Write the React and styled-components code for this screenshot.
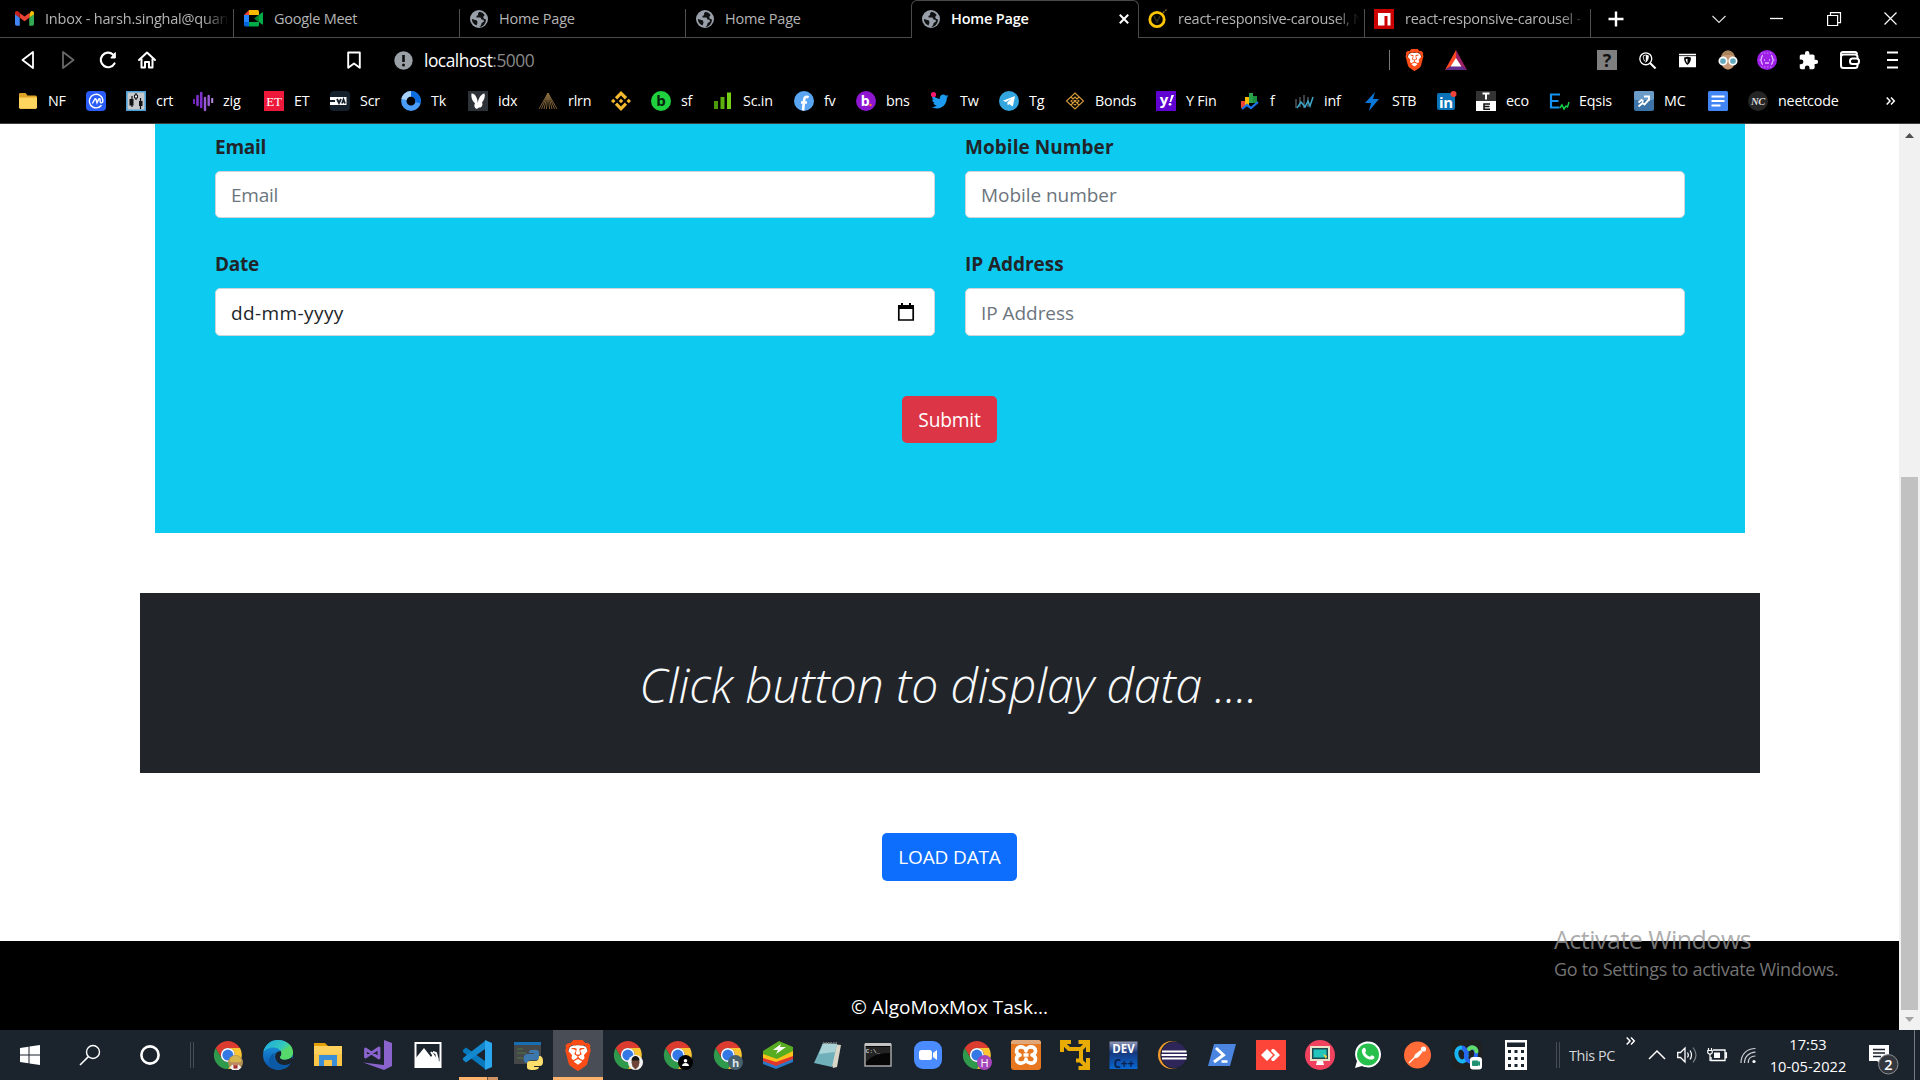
import React from "react";
import styled, { createGlobalStyle } from "styled-components";
import { SiBrave, SiBinance } from "react-icons/si";
import { FaTwitter } from "react-icons/fa";

const FONT = `"Segoe UI", "Open Sans", "Noto Sans", sans-serif`;

const GlobalStyle = createGlobalStyle`
  *, *::before, *::after { box-sizing: border-box; }
  body { margin: 0; overflow: hidden; font-family: ${FONT}; }
  svg { display: block; flex: none; overflow: visible; }
`;

/* ---------- shell ---------- */
const Screen = styled.div`
  width: 1920px;
  height: 1080px;
  display: flex;
  flex-direction: column;
  background: #000;
  position: relative;
`;
const Browser = styled.header`
  height: 124px;
  flex: none;
  background: #000;
  border-bottom: 1px solid #3e3e3e;
`;

/* ---------- tab strip ---------- */
const TabStrip = styled.div`
  display: flex;
  height: 38px;
`;
const Tab = styled.div`
  width: ${(p) => p.$w}px;
  height: 38px;
  flex: none;
  display: flex;
  align-items: center;
  gap: 11px;
  padding: 0 0 0 ${(p) => p.$pad || 10}px;
  border-bottom: 1px solid #4a4a4a;
  position: relative;
  ${(p) =>
    p.$active
      ? `border: 1px solid #4a4a4a; border-bottom: 0; border-radius: 6px 6px 0 0; padding: 0 0 1px 10px;`
      : p.$sep !== false &&
        `&::after { content: ""; position: absolute; right: 0; top: 9px; width: 1px; height: 28px; background: #4f4f4f; }`}
`;
const TabTitle = styled.span`
  flex: 1;
  height: 22px;
  line-height: 21px;
  margin-right: ${(p) => (p.$fade ? 5 : 8)}px;
  overflow: hidden;
  white-space: nowrap;
  font-size: 14.5px;
  letter-spacing: ${(p) => p.$ls || 0}px;
  font-weight: ${(p) => (p.$active ? 600 : 400)};
  color: ${(p) => (p.$active ? "#fff" : "#b4b4b4")};
  ${(p) => p.$fade && `mask-image: linear-gradient(90deg, #000 86%, transparent 100%);`}
`;
const TabClose = styled.span`
  width: 22px;
  margin-right: 3px;
  display: grid;
  place-items: center;
`;
const StripControls = styled.div`
  flex: 1;
  display: flex;
  align-items: center;
  border-bottom: 1px solid #4a4a4a;
`;
const Control = styled.span`
  width: ${(p) => p.$w}px;
  margin-left: ${(p) => p.$ml || 0}px;
  flex: none;
  display: grid;
  place-items: center;
`;

/* ---------- toolbar ---------- */
const Toolbar = styled.div`
  display: flex;
  align-items: center;
  height: 44px;
`;
const Tool = styled.span`
  width: ${(p) => p.$w}px;
  margin-left: ${(p) => p.$ml || 0}px;
  flex: none;
  display: grid;
  place-items: center;
`;
const Address = styled.div`
  margin-left: 6px;
  width: 965px;
  flex: none;
  font-size: 17.4px;
  line-height: 24px;
  letter-spacing: -0.5px;
  color: #fff;
`;
const Port = styled.span`
  color: #888;
`;
const ToolDivider = styled.i`
  width: 1px;
  height: 20px;
  background: #777;
`;

/* ---------- bookmarks ---------- */
const Bookmarks = styled.div`
  display: flex;
  align-items: center;
  height: 38px;
  padding: 0 0 1px 18px;
`;
const Bookmark = styled.div`
  width: ${(p) => p.$w}px;
  flex: none;
  display: flex;
  align-items: center;
  gap: 10px;
  color: #fff;
  font-size: 14.3px;
  line-height: 20px;
  letter-spacing: -0.2px;
  white-space: nowrap;
`;

/* ---------- page ---------- */
const PageRow = styled.div`
  display: flex;
  height: 906px;
  flex: none;
  background: #fff;
`;
const Viewport = styled.main`
  width: 1899px;
  display: flex;
  flex-direction: column;
`;
const FormPanel = styled.form`
  width: 1590px;
  height: 409px;
  margin-left: 155px;
  padding: 8px 60px 0;
  background: #0dcaf0;
  display: flex;
  flex-direction: column;
  align-items: center;
`;
const Fields = styled.div`
  width: 100%;
  display: grid;
  grid-template-columns: 720px 720px;
  column-gap: 30px;
  row-gap: 31px;
`;
const Field = styled.label`
  display: flex;
  flex-direction: column;
`;
const FieldLabel = styled.span`
  height: 39px;
  line-height: 30px;
  font-size: 19px;
  font-weight: 700;
  color: #212529;
  letter-spacing: ${(p) => p.$ls}px;
`;
const FieldBox = styled.div`
  height: ${(p) => p.$h || 47}px;
  display: flex;
  align-items: center;
  justify-content: space-between;
  padding: 0 18px 0 15px;
  background: #fff;
  border: 1px solid #ced4da;
  border-radius: 5px;
  font-size: 19px;
  letter-spacing: ${(p) => p.$ls}px;
  color: ${(p) => (p.$filled ? "#212529" : "#6c757d")};
`;
const FieldText = styled.span`
  padding-top: ${(p) => (p.$low ? 2 : 0)}px;
`;
const Button = styled.button`
  width: ${(p) => p.$w}px;
  height: ${(p) => p.$h || 47}px;
  flex: none;
  padding: 0;
  border: 0;
  border-radius: 5px;
  color: #fff;
  background: ${(p) => p.$bg};
  font: 400 ${(p) => p.$fs}px/30px ${FONT};
  letter-spacing: ${(p) => p.$ls}px;
  white-space: nowrap;
  margin-top: 60px;
  margin-right: ${(p) => p.$mr || 0}px;
`;
const Banner = styled.section`
  width: 1620px;
  height: 180px;
  margin: 60px 0 0 140px;
  padding: 4px 3px 0 0;
  display: grid;
  place-items: center;
  background: #212529;
`;
const BannerText = styled.h1`
  margin: 0;
  font-size: 48px;
  font-weight: 300;
  font-style: italic;
  line-height: 60px;
  letter-spacing: -0.1px;
  color: #f8f9fa;
  white-space: nowrap;
`;
const LoadRow = styled.div`
  height: 168px;
  display: flex;
  justify-content: center;
`;
const Footer = styled.footer`
  height: 89px;
  display: flex;
  justify-content: center;
  padding-top: 51px;
  background: #000;
  color: #fff;
  font-size: 19px;
  line-height: 30px;
  letter-spacing: 0.04px;
`;
const Scrollbar = styled.aside`
  width: 21px;
  display: flex;
  flex-direction: column;
  align-items: center;
  padding-top: 9px;
  background: #f1f1f1;
`;
const Thumb = styled.div`
  width: 17px;
  height: 533px;
  margin: 339px 0 7px;
  background: #c1c1c1;
`;

const Activation = styled.div`
  position: absolute;
  left: 1554px;
  top: 921px;
  color: rgba(150, 150, 150, 0.78);
  white-space: nowrap;
`;
const ActivationTitle = styled.div`
  font-size: 25px;
  line-height: 36px;
  letter-spacing: -0.5px;
`;
const ActivationHint = styled.div`
  font-size: 18px;
  line-height: 24px;
  letter-spacing: -0.3px;
`;

/* ---------- taskbar ---------- */
const Taskbar = styled.footer`
  height: 50px;
  flex: none;
  display: flex;
  align-items: stretch;
  background: #1b232d;
`;
const TaskCell = styled.div`
  width: ${(p) => p.$w}px;
  flex: none;
  display: grid;
  place-items: center;
  background: ${(p) => (p.$active ? "#494e56" : "transparent")};
  box-shadow: ${(p) => (p.$active ? "inset 0 -3px #ffb26b" : "none")};
  ${(p) =>
    p.$open &&
    `background: linear-gradient(90deg, #ffb26b 28px, #70543c 28px 29px, #cf9262 29px) 6px 47px / 39px 3px no-repeat;`}
`;
const Grip = styled.i`
  width: 4px;
  height: 26px;
  flex: none;
  align-self: center;
  border: solid #474d56;
  border-width: 0 1px;
`;
const Tray = styled.div`
  flex: 1;
  margin-left: 16px;
  display: flex;
  align-items: center;
  color: #fff;
`;
const TrayText = styled.span`
  margin-left: 9px;
  width: 53px;
  flex: none;
  font-size: 14.4px;
  letter-spacing: -0.4px;
  color: #d6d8da;
  white-space: nowrap;
`;
const TrayItem = styled.span`
  width: ${(p) => p.$w}px;
  height: 50px;
  padding-bottom: ${(p) => p.$raise || 0}px;
  flex: none;
  display: grid;
  place-items: center;
`;
const Clock = styled.div`
  width: 96px;
  flex: none;
  font-size: 14.6px;
  line-height: 22.5px;
  letter-spacing: 0.05px;
  text-align: center;
`;
const ShowDesktop = styled.i`
  width: 1px;
  height: 50px;
  margin-left: auto;
  margin-right: 5px;
  background: #747980;
`;

/* ---------- icons ---------- */
const Svg = ({ s = 20, w, h, v = 20, children, ...r }) => (
  <svg width={w || s} height={h || s} viewBox={`0 0 ${v} ${v}`} fill="none" {...r}>
    {children}
  </svg>
);
const Letter = ({ x = 10, y = 15, size = 14, fill = "#fff", children, ...r }) => (
  <text x={x} y={y} fontSize={size} fill={fill} textAnchor="middle" fontFamily="Open Sans, sans-serif" fontWeight="700" {...r}>
    {children}
  </text>
);

const Gmail = () => (
  <Svg s={19} v={24}>
    <path d="M0 6v13a2 2 0 0 0 2 2h4V11z" fill="#4285f4" />
    <path d="M24 6v13a2 2 0 0 1-2 2h-4V11z" fill="#34a853" />
    <path d="M18 6.5V11l6-4.5V5c0-2-2.3-3.2-4-2z" fill="#fbbc04" />
    <path d="M6 11V5l6 4.5L18 5v6l-6 4.5z" fill="#ea4335" />
    <path d="M0 5v1.5L6 11V4.800L4 3.200C2.300 2 0 3 0 5z" fill="#c5221f" />
  </Svg>
);
const Meet = () => (
  <Svg s={19} v={19}>
    <path d="M0 6h5v8H0z" fill="#2684fc" />
    <path d="M0 6l5-5v5z" fill="#ea4335" />
    <path d="M5 1h8.500a1.500 1.500 0 0 1 1.500 1.500V6H5z" fill="#ffba00" />
    <path d="M0 13h5v4.500H1.500A1.500 1.500 0 0 1 0 16z" fill="#0066da" />
    <path d="M5 13h10v3a1.500 1.500 0 0 1-1.500 1.500H5z" fill="#00ac47" />
    <path d="M10 9.500l5-4v8z" fill="#00832d" />
    <path d="M15 6l3-2.600c.5-.4 1-.1 1 .5v11c0 .6-.5.9-1 .5L15 13z" fill="#00ac47" />
  </Svg>
);
const Globe = () => (
  <Svg s={18} v={18}>
    <circle cx="9" cy="9" r="9" fill="#9aa0a9" />
    <path d="M9.500 1.800 8 3.200 8.200 5 6.500 6v1.500h4l1 2 2 .3.500 1.600-2.300 1.600-.8 2.500-1.700 1.500A7.200 7.200 0 0 0 16 9.500L14 8.800l-.9-1.900L14.700 5A7.200 7.200 0 0 0 9.500 1.800zM2 9l5 1.600.5 2.200-1 2.600A7.200 7.200 0 0 1 1.900 9.700z" fill="#101113" />
  </Svg>
);
const Codesandbox = () => (
  <Svg s={19} v={19}>
    <circle cx="9" cy="10.500" r="7.200" stroke="#fec502" strokeWidth="2.800" />
    <path d="M6 7l3 6 3-6" stroke="#2e2c1c" strokeWidth="1.600" />
    <path d="M15 4l3.500-3.500" stroke="#80682a" strokeWidth="1.500" strokeDasharray="2 1.200" />
  </Svg>
);
const Npm = () => (
  <Svg>
    <path d="M0 0h20v20H0z" fill="#cb0000" />
    <path d="M4 4h12.500v12.500h-3V7h-3v9.500H4z" fill="#fff" />
  </Svg>
);

const tabs = [
  { icon: <Gmail />, title: "Inbox - harsh.singhal@quantr", w: 234, pad: 15, fade: true, ls: -0.2 },
  { icon: <Meet />, title: "Google Meet", w: 226, ls: -0.25 },
  { icon: <Globe />, title: "Home Page", w: 226, ls: -0.2 },
  { icon: <Globe />, title: "Home Page", w: 225, sep: false, ls: -0.2 },
  { icon: <Globe />, title: "Home Page", w: 228, active: true, ls: -0.2 },
  { icon: <Codesandbox />, title: "react-responsive-carousel, Nex", w: 226, pad: 9, fade: true, ls: -0.25 },
  { icon: <Npm />, title: "react-responsive-carousel - npm", w: 226, pad: 9, fade: true, ls: -0.25 },
];

const BraveMark = ({ w, h }) => (
  <svg width={w} height={h} viewBox="0 0 24 24" preserveAspectRatio="none">
    <path d="M5.500 5.500l3-1.500h7l3 1.500 1.500 4-2 6-6 5.500-6-5.500-2-6z" fill="#fff" />
    <SiBrave size={24} color="#fb4c17" />
  </svg>
);

const bookmarks = [
  ["NF", 68, <Svg><path d="M1 3.500C1 2.500 1.500 2 2.500 2h5l2 2.500H17c1 0 2 .5 2 1.800V16c0 1-.8 1.800-1.800 1.800H2.800C1.800 17.800 1 17 1 16z" fill="#e0a526" /><path d="M1 6.500h18V16c0 1-.8 1.800-1.800 1.800H2.800C1.800 17.800 1 17 1 16z" fill="#ffd55f" /></Svg>],
  ["", 40, <Svg><rect width="20" height="20" rx="4" fill="#2a5cf7" /><path d="M15.500 14.200A6.800 6.800 0 1 1 16.900 10c0 2.200-2.700 2.700-2.800.2V8.600c0-1-1-1.200-1.500-.2L11 11.700 10 8.300c-.2-.8-1-.8-1.300 0L6.400 12.500" stroke="#fff" strokeWidth="1.400" /></Svg>],
  ["crt", 67, <Svg><path d="M.8.8h18.400v18.400H.8z" fill="#c6c9cb" stroke="#4e9fd5" strokeWidth="1.600" /><path d="M6 5v11M10 2v7M14.500 7v11" stroke="#111" strokeWidth="1.200" /><path d="M3.500 8h4v6.500h-4zM13 10h3.500v5H13z" fill="#111" /><path d="M8.500 4h3v3h-3z" fill="#eee" stroke="#111" /></Svg>],
  ["zig", 71, <Svg><path d="M1 8v5" stroke="#6d22b8" strokeWidth="2" /><path d="M4.500 5v9M8.200 2v14" stroke="#7c30cc" strokeWidth="2.600" strokeLinecap="round" /><path d="M12 7v12M15.700 5v9" stroke="#9a5cd4" strokeWidth="2.400" strokeLinecap="round" /><path d="M19.200 7v5" stroke="#b58ae0" strokeWidth="2" /></Svg>],
  ["ET", 66, <Svg><path d="M0 0h20v20H0z" fill="#ed193b" /><Letter size={13} y={15} fontWeight="400" fontFamily="Liberation Serif, serif">ET</Letter></Svg>],
  ["Scr", 71, <Svg><rect width="20" height="20" rx="4" fill="#14202c" /><path d="M0 6h16.500v8H0z" fill="#fff" /><path d="M0 10h5M7 8l2 4 2-4M12 12.500l1.500-4 1.500 4" stroke="#14202c" strokeWidth="1.800" /></Svg>],
  ["Tk", 67, <Svg><circle cx="10" cy="10" r="7.200" stroke="#4a9df8" strokeWidth="5.400" /><path d="M10 2.800a7.200 7.200 0 0 1 7 9" stroke="#0b6de0" strokeWidth="5.400" /><path d="M3 8.500A7.200 7.200 0 0 1 10 2.800" stroke="#a9d2fb" strokeWidth="5.400" /></Svg>],
  ["idx", 70, <Svg><path d="M0 0h20v20H0z" fill="#2d3238" /><path d="M9 18c-3-1-3-4-2-6-3-2-4-6-3.500-9.500C7 2 9.500 7 9.800 12 10.500 7 13 3 16.500 2.500c1 3-.5 6.500-2.500 9 1.500 3-1 5.500-3 5-.8.3-1.500 1-2 1.500z" fill="#fff" /></Svg>],
  ["rlrn", 73, <Svg><path d="M10 2L1 18M10 2L3.500 18M10 2L6 18M10 2L8.500 18M10 2l1.500 16M10 2l4 16M10 2l6.500 16M10 2l9 16" stroke="#8a6d3f" strokeWidth=".9" /></Svg>],
  ["", 40, <SiBinance size={20} color="#f3ba2f" />],
  ["sf", 62, <Svg><circle cx="10" cy="10" r="10" fill="#1fd03f" /><Letter fill="#06210c" size={15}>b</Letter></Svg>],
  ["Sc.in", 81, <Svg><path d="M3 10v8" stroke="#4c9a0a" strokeWidth="4" /><path d="M9.500 6v12" stroke="#5cb00d" strokeWidth="4" /><path d="M16 1.500V18" stroke="#74d017" strokeWidth="4" /></Svg>],
  ["fv", 62, <Svg><circle cx="10" cy="10" r="10" fill="#5aa5f2" /><path d="M14.500 6.500c-2-1.500-4-.5-4.300 2L9 19.500M7 11.500h6" stroke="#fff" strokeWidth="2.600" /></Svg>],
  ["bns", 74, <Svg><circle cx="10" cy="10" r="10" fill="#8e16d0" /><Letter size={14} x={9}>b</Letter><circle cx="14.500" cy="14" r="1.200" fill="#ff7c30" /></Svg>],
  ["Tw", 69, <Svg><g transform="translate(1.500 2)"><FaTwitter size={17} color="#1d9bf0" /></g><circle cx="3.500" cy="3.500" r="2.600" fill="#f5186c" /></Svg>],
  ["Tg", 66, <Svg><circle cx="10" cy="10" r="10" fill="#34a6df" /><path d="M3.800 9.800l11-4.400c.7-.3 1.200.1 1 .9l-1.800 8.300c-.1.7-.6.8-1.200.5l-2.600-2-1.400 1.300-.6-2.800 4.400-4-5.600 3.500z" fill="#fff" /></Svg>],
  ["Bonds", 91, <Svg><path d="M10 2l8.500 8-8.500 8-8.500-8zM6 6l8 8M14 6l-8 8M10 6l4 4-4 4-4-4z" stroke="#d79a3b" strokeWidth="1.100" /></Svg>],
  ["Y Fin", 84, <Svg><path d="M0 0h20v20H0z" fill="#6001d2" /><Letter size={15} x={8} y={14}>y</Letter><path d="M13.500 11l2-7h2.500l-2.800 7z" fill="#fff" /><circle cx="14" cy="13.300" r="1.400" fill="#fff" /></Svg>],
  ["f", 54, <Svg><path d="M9 2h4v10H9z" fill="#2ba24c" /><path d="M13 5h4v7h-4z" fill="#1d8f3e" /><path d="M5 6h4v8H5z" fill="#fbbc04" /><path d="M1 10h4v7H1z" fill="#ea4335" /><path d="M2 18l5-4 4 3 7-6" stroke="#1a73e8" strokeWidth="2.200" /></Svg>],
  ["inf", 68, <Svg><path d="M2 8v9M6 6v10M10 4v13M14 6v10" stroke="#4d555b" strokeWidth="1.500" /><path d="M3 17l4-6 4 5 3-6 2 5 3-9" stroke="#3aa6c9" strokeWidth="1.500" /></Svg>],
  ["STB", 75, <Svg><path d="M13 1L3 12h6l-2 8L17 8h-6z" fill="#0b78d8" /></Svg>],
  ["", 39, <Svg><rect y="2" width="18" height="17" rx="2" fill="#0a73b7" /><Letter x={9} y={16.500} size={15}>in</Letter><circle cx="16.500" cy="3" r="3" fill="#f0433a" /></Svg>],
  ["eco", 73, <Svg><path d="M0 0h20v10H0z" fill="#333" /><path d="M0 10h20v10H0z" fill="#fff" /><path d="M6.500 2.500h7M10 2.500v6" stroke="#fff" strokeWidth="2" /><path d="M14 13H8v5.200h6M8 15.600h5.500" stroke="#111" strokeWidth="1.500" /></Svg>],
  ["Eqsis", 85, <Svg><path d="M11 3.500H2v13h8.500M2 10h7.500" stroke="#1593f0" strokeWidth="2.200" /><path d="M11 17l2-3 2 4 2-3 1.500 1 1.500-5" stroke="#13d64a" strokeWidth="1.400" /></Svg>],
  ["MC", 74, <Svg><rect width="20" height="20" rx="2" fill="#3d74a8" /><rect width="20" height="9" rx="2" fill="#6b9cc8" /><path d="M4.500 15.500l4-3.500 2 1.500 4-4.500M4.500 11.500l3-2.500 2 1.500M10 5.500h5V10" stroke="#fff" strokeWidth="1.900" /></Svg>],
  ["", 40, <Svg><rect width="20" height="20" rx="1.500" fill="#4285f4" /><path d="M3.500 5.500h13M3.500 10h13M3.500 14.500h9" stroke="#fff" strokeWidth="2.200" /></Svg>],
  ["neetcode", 138, <Svg><circle cx="10" cy="10" r="10" fill="#252525" /><Letter size={10.500} y={13.500} fontFamily="Liberation Serif, serif" fontStyle="italic" fill="#ddd">NC</Letter></Svg>],
];

const Chrome = ({ badge }) => (
  <Svg s={30} v={30}>
    <g transform="translate(.8 1) scale(1.170)">
      <path d="M1.610 6A12 12 0 0 1 22.390 6H12A6 6 0 0 0 6.800 15z" fill="#dc3b2f" />
      <path d="M22.390 6A12 12 0 0 1 12 24l5.200-9A6 6 0 0 0 12 6z" fill="#fcc531" />
      <path d="M12 24A12 12 0 0 1 1.610 6L6.800 15a6 6 0 0 0 10.400 0z" fill="#2f9a4c" />
      <circle cx="12" cy="12" r="6" fill="#fff" />
      <circle cx="12" cy="12" r="4.700" fill="#3478e5" />
    </g>
    {badge}
  </Svg>
);
const Badge = ({ bg, children }) => (
  <g transform="translate(22.500 22.500)">
    <circle r="7.500" fill={bg} />
    {children}
  </g>
);

const taskApps = [
  { icon: <Chrome badge={<Badge bg="#b28f55"><path d="M-6-1a6 6 0 0 1 12 0l-2 1h-8z" fill="#d5b64e" /><path d="M-4 0h8v4h-8z" fill="#c08564" /><path d="M-6 5l3-3 3 4 3-4 3 3-3 2.500h-6z" fill="#eee" /><path d="M-2 3h4v3h-4z" fill="#a62b2b" /></Badge>} /> },
  { icon: (
    <Svg s={30} v={30}>
      <defs>
        <linearGradient id="edgeTop" x1="0" y1="0" x2="1" y2=".5"><stop stopColor="#1fa8e0" /><stop offset=".6" stopColor="#30c6c0" /><stop offset="1" stopColor="#62e05a" /></linearGradient>
        <linearGradient id="edgeLow" x1="0" y1="0" x2="0" y2="1"><stop stopColor="#1b9de2" /><stop offset="1" stopColor="#0a4ea8" /></linearGradient>
      </defs>
      <circle cx="15" cy="15" r="15" fill="url(#edgeLow)" />
      <path d="M.3 12C2 4.500 8 0 15 0c9 0 15 6 15 12 0 5-4 7.500-8 7.500-3.500 0-5-1-5-2 0-.8 1.500-1.500 1.500-4 0-3-3.500-6-8-6-5 0-9 2.500-10.200 4.500z" fill="url(#edgeTop)" />
      <path d="M11 15c0 7 5 10 10 10 3 0 5-1 7-2-3 5-8 7-13 7-6 0-9-5-9-9 0-3 2-7 6-8z" fill="#0c59a4" />
      <path d="M18 11c1 2 .5 4-1 6 0 2 3 3 6 2.500 2 0 4-1 6-2.500l1 3-2 3c-8 5-16 0-16-7 0-2 2-5 6-5z" fill="#1b232d" />
      <path d="M18 11c1 3 .5 4-1 6 0 2 2 2.500 5 2.500 5 0 8-3 8-7.500L27 6z" fill="#56d96a" />
    </Svg>
  ) },
  { icon: <Svg s={30} v={30}><path d="M1 3h11l3 3h-14z" fill="#e3a008" /><path d="M1 6h28v20H1z" fill="#ffd15c" /><path d="M1 14h28v12H1z" fill="#fbc547" /><path d="M6 26V15h18v11h-5v-6h-8v6z" fill="#3b8fd9" /></Svg> },
  { icon: <Svg s={30} v={30}><path d="M21 0l8 3v23l-8 4L0 22.500l21 2.500z" fill="#8a63cc" /><path d="M2.500 9v8L16 8v10z" stroke="#8a63cc" strokeWidth="2.800" strokeLinejoin="round" /></Svg> },
  { icon: <Svg s={30} v={30}><path d="M2.500 3h25v24h-25z" stroke="#fff" strokeWidth="2" /><path d="M2 27V19l9-11 7 9 2-3 8 9v4z" fill="#fff" /><path d="M18 12l5 7M20 12l3 1 2 7" stroke="#fff" strokeWidth="2" /></Svg> },
  { open: true, icon: <Svg s={30} v={30}><path d="M0 10l3-2.500L22 21v8L0 12z" fill="#0879be" /><path d="M0 20l3 2.500L22 9V1L0 18z" fill="#1388cf" /><path d="M22 0l7 3v24l-7 3z" fill="#2aa7ee" /></Svg> },
  { icon: <Svg s={30} v={30}><path d="M1 2h27v22H1z" fill="#454748" /><path d="M1 2h27v3H1z" fill="#176fb3" /><path d="M4 9h6M4 13h9M4 18h6" stroke="#4e7b45" strokeWidth="1.200" /><path d="M19 10c5-1 7 0 7 3v4c0 2-1 3-3 3h-5c-2 0-3 1-3 3h-2c-2-1-3-3-2-7 1-2 2-2 4-2h6v-1h-5c0-2 0-3 3-3z" fill="#3c77ad" /><path d="M20 30c-5 0-6-1-6-3v-3c0-2 1-3 3-3h5c3 0 4-2 4-5 3 0 4 2 4 5 0 4-1 5-4 5h-5v1h5c0 2-2 3-6 3z" fill="#ffdf6b" /></Svg> },
  { active: true, icon: <BraveMark w={30} h={31} /> },
  { icon: <Chrome badge={<Badge bg="#f3f3f3"><path d="M-4 0c0-7 8-7 8 0l-1 4-3 3-3-3z" fill="#6d4436" /><path d="M-4-2c0-6 8-6 8 0z" fill="#171717" /></Badge>} /> },
  { icon: <Chrome badge={<Badge bg="#000"><circle cy="-1.800" r="1.800" fill="#fff" /><path d="M-3.500 3.500c0-4 7-4 7 0z" fill="#fff" /></Badge>} /> },
  { icon: <Chrome badge={<Badge bg="#47606d"><Letter x={0} y={4} size={11} fill="#dfe6ea">h</Letter></Badge>} /> },
  { icon: <Svg s={30} v={30}><path d="M0 20l12-6 18 3v5L13 29 0 24z" fill="#2a79c4" /><path d="M0 17l12-6 18 3v5L13 26 0 21z" fill="#e2352e" /><path d="M0 14l12-6 18 3v5L13 22 0 18z" fill="#fbc21a" /><path d="M0 11L16 1l14 6v4L14 19 0 14z" fill="#58ac22" /><path d="M10 10l8-6-1 3 6 0-10 7 2-4z" fill="#fff" /></Svg> },
  { icon: <Svg s={30} v={30}><path d="M10 3l18 2-4 22-4 1z" fill="#d9d6c8" /><path d="M10 3l14 1-5 23L1 23z" fill="#6fb0bb" /><path d="M10 3l14 1-2 8L6 14z" fill="#a9d3d6" /><path d="M10 3h15" stroke="#777" strokeWidth="2" strokeDasharray="1.500 1" /></Svg> },
  { icon: <Svg s={30} v={30}><path d="M2 4.500h26v21.500H2z" fill="#060606" stroke="#a6a6a6" strokeWidth="1.500" /><path d="M2 3h26v3H2z" fill="#c3c3c3" /><path d="M3 7h24v6c-12 0-18 3-24 9z" fill="#242424" /><Letter x={10} y={13} size={6} fill="#ccc" fontFamily="Liberation Mono, monospace">C:\_</Letter></Svg> },
  { icon: <Svg s={30} v={30}><rect x="1" y="1" width="28" height="28" rx="9" fill="#4a8cfd" /><rect x="6" y="10" width="13" height="10" rx="2.500" fill="#fff" /><path d="M20 13l4-3v10l-4-3z" fill="#fff" /></Svg> },
  { icon: <Chrome badge={<Badge bg="#a446b9"><Letter x={0} y={4} size={11} fontWeight="400">H</Letter></Badge>} /> },
  { icon: <Svg s={30} v={30}><rect width="30" height="30" rx="3" fill="#e8781f" /><path d="M0 3a3 3 0 0 1 3-3h24a3 3 0 0 1 3 3v1H0z" fill="#e0a878" /><path d="M15 11C15 6 24.500 5 24.500 11C24.500 14 21 15 21 15C21 15 24.500 16 24.500 19C24.500 25 15 24 15 19C15 24 5.500 25 5.500 19C5.500 16 9 15 9 15C9 15 5.500 14 5.500 11C5.500 5 15 6 15 11zM12.500 15h5" stroke="#fff" strokeWidth="3.600" strokeLinejoin="round" /></Svg> },
  { icon: <Svg s={30} v={30}><path d="M2 12V2h9M2 2l7 7h12M18.500 2H28v10M28 2l-7 7v12l7 7M28 18v10h-9.500M16 20.500h5" stroke="#e8ac05" strokeWidth="4" /></Svg> },
  { icon: <Svg s={30} v={30}><defs><linearGradient id="dev" x1="0" y1="0" x2="0" y2="1"><stop stopColor="#9298b8" /><stop offset=".4" stopColor="#17387e" /><stop offset="1" stopColor="#0868d3" /></linearGradient></defs><path d="M.5 1.500h28v27.500H.5z" fill="url(#dev)" /><Letter x={14.500} y={12.500} size={11.500}>DEV</Letter><Letter x={15} y={28} size={11.500} fill="#08204e">C++</Letter></Svg> },
  { icon: <Svg s={30} v={30}><circle cx="14" cy="15" r="14" fill="#f19a2e" /><circle cx="16" cy="15" r="13.700" fill="#1b232d" /><circle cx="16" cy="15" r="12.800" fill="#2e2558" /><path d="M4 11.500h24.500M3.500 15h25.500M4 18.500h24.500" stroke="#fff" strokeWidth="1.900" /></Svg> },
  { icon: <Svg s={30} v={30}><path d="M7 4h22l-6 22H1z" fill="#4b85df" /><path d="M9 8l7.500 7L7 22" stroke="#fff" strokeWidth="3" /><path d="M14.500 21.500h6" stroke="#fff" strokeWidth="2.500" /></Svg> },
  { icon: <Svg s={30} v={30}><path d="M0 0h30v30H0z" fill="#fe4539" /><path d="M11 9l6 6-6 6-6-6zM16 9h2l6 6-6 6h-2l-1-2 4-4-4-4z" fill="#fff" /></Svg> },
  { icon: <Svg s={30} v={30}><circle cx="15" cy="15" r="15" fill="#f0415f" /><path d="M5 6h20v15H5z" fill="#e9e1c9" /><path d="M7 8h16v11H7z" fill="#1b4b52" /><path d="M8.500 9.500h13v8h-13z" fill="#23c4bb" /><path d="M12 21h6l1 4h-8z" fill="#fff" /><path d="M18 14l4 2-1 3z" fill="#ffd43c" /></Svg> },
  { icon: <Svg s={30} v={30}><path d="M1 28l2-7C-2 11 4 1.500 14 1.500c8 0 13 6 13 13 0 9-9 16-19 11.500z" fill="#fff" /><circle cx="14" cy="14.500" r="11" fill="#28c04c" /><path d="M9.500 8c1-.5 2 0 2.500 2.500.2.800-1 1.500-.7 2.200 1 2 2.500 3.300 4.500 4 .8 0 1.300-1.500 2-1.500 2.500 1 3 1.500 2.500 2.800-2.500 4-12 0-12.500-7 0-1.400 1-2.500 1.700-3z" fill="#fff" /></Svg> },
  { icon: <Svg s={30} v={30}><circle cx="14.500" cy="15" r="13.500" fill="#ff6c37" /><path d="M6 23l9-9" stroke="#fff" strokeWidth="1.200" /><path d="M10.500 18.500l1.500-4 5.500-4.500 2 2-4.500 5.500z" fill="#fff" /><circle cx="20.500" cy="9" r="2.600" fill="#fff" /></Svg> },
  { icon: <Svg s={30} v={30}><rect width="30" height="30" rx="6" fill="#1f2021" /><ellipse cx="9.500" cy="14.500" rx="5" ry="7" stroke="#18b4f4" strokeWidth="4" transform="rotate(-14 9.500 14.500)" /><ellipse cx="19" cy="14.500" rx="5" ry="7" stroke="#2668f0" strokeWidth="4" transform="rotate(14 19 14.500)" /><path d="M17 9c3-3 7-1.500 7.500 2.500" stroke="#5fdc6b" strokeWidth="4" strokeLinecap="round" /><path d="M10 7.500c3 0 4 4 4.500 7" stroke="#2668f0" strokeWidth="4" /><rect x="18" y="17" width="12" height="12.500" rx="3" fill="#fff" /><rect x="20" y="20.500" width="6.500" height="5.500" rx="1" fill="#1d9170" /><path d="M26 22.500l2-1.500v5l-2-1.500z" fill="#1d9170" /></Svg> },
  { icon: <Svg s={30} v={30}><path d="M4 0h22v30H4z" fill="#fff" /><path d="M6 2.500h18v4.500H6z" fill="#1b232d" /><g stroke="#1b232d" strokeWidth="3"><path d="M7 11.500h16M7 18.500h16M7 25.500h16" strokeDasharray="3 3.500" /></g></Svg> },
];
const cellWidth = (i) => (i < 15 ? 50 : i === 15 ? 48 : 49);

const BackIcon = () => <Svg><path d="M15 2v16L4.500 10z" stroke="#fff" strokeWidth="1.800" strokeLinejoin="round" /></Svg>;
const ForwardIcon = () => <Svg><path d="M5 2v16l10.500-8z" stroke="#686868" strokeWidth="1.800" strokeLinejoin="round" /></Svg>;
const ReloadIcon = () => <Svg><path d="M16.500 13.500A7.300 7.300 0 1 1 15 4.500" stroke="#fff" strokeWidth="2.200" strokeLinecap="round" /><path d="M17.300 2.500v5.500h-4.500z" fill="#fff" stroke="#fff" strokeLinejoin="round" /></Svg>;
const HomeIcon = () => <Svg><path d="M2 10l8-7.500 8 7.500M4.500 9v8.500H8V12h4v5.500h3.500V9" stroke="#fff" strokeWidth="2" strokeLinejoin="round" strokeLinecap="round" /></Svg>;
const BookmarkIcon = () => <Svg><path d="M4.200 2.500h11.600v15.300L10 13.500l-5.800 4.300z" stroke="#fff" strokeWidth="1.900" strokeLinejoin="round" /></Svg>;
const InfoIcon = () => <Svg s={19} v={19}><circle cx="9.500" cy="9.500" r="9.200" fill="#9aa0a6" /><path d="M9.500 4v7" stroke="#0c0c0c" strokeWidth="2.600" /><circle cx="9.500" cy="14" r="1.500" fill="#0c0c0c" /></Svg>;
const BatIcon = () => <Svg w={22} h={20} preserveAspectRatio="none"><path d="M10 0L0 20l10-7z" fill="#ff4724" /><path d="M10 0l10 20-10-7z" fill="#9e1f63" /><path d="M0 20h20l-5-4H6z" fill="#662d91" /><path d="M10 8l5 8.500H5z" fill="#fff" /></Svg>;
const QuestionIcon = () => <Svg><path d="M0 0h20v20H0z" fill="#7f7f7f" /><Letter size={18} y={16.500} fill="#111">?</Letter></Svg>;
const SearchIcon = () => <Svg s={17}><circle cx="8" cy="8" r="7" stroke="#fff" strokeWidth="1.600" /><path d="M13 13l6.500 6.500" stroke="#fff" strokeWidth="2.400" /><path d="M5 4.500l3-1 3 1c0 4-1 6-3 7.500-2-1.500-3-3.500-3-7.500z" stroke="#fff" /><path d="M8 3.500V12c2-1.500 3-3.500 3-7.500z" fill="#fff" /></Svg>;
const ShieldWindowIcon = () => <Svg w={17} h={15} preserveAspectRatio="none"><path d="M0 1h20v18H0z" fill="#fff" /><path d="M0 3.500h20" stroke="#000" /><path d="M6 6l4-1 4 1c0 5-1 7-4 10-3-3-4-5-4-10z" fill="#000" /><path d="M10 7.500v6c-1.500-1.500-2-3-2-5.500z" fill="#fff" /></Svg>;
const AvatarIcon = () => <Svg><path d="M4 8c0-10 12-10 12 0v6c0 3-3 5.500-6 5.500S4 17 4 14z" fill="#c69775" /><path d="M3 9C2-2 18-2 17 9l-3-4H6z" fill="#a8845c" /><circle cx="5" cy="11" r="3.700" fill="#64a8bd" stroke="#fff" strokeWidth="1.700" /><circle cx="15" cy="11" r="3.700" fill="#64a8bd" stroke="#fff" strokeWidth="1.700" /></Svg>;
const BracesIcon = () => <Svg><circle cx="10" cy="10" r="10" fill="#9d1fe8" /><path d="M6 5.500c-2 0-1 4-2.500 4.500C5 10.500 4 14.500 6 14.500M14 5.500c2 0 1 4 2.500 4.500-1.500.5-.5 4.500-2.500 4.500M7 10h1M12 10h1M8 13h4" stroke="#e4b8ff" strokeWidth="1.300" /><path d="M4 3h12M4 17h12" stroke="#cf8bf7" strokeDasharray="1.500 1.500" /></Svg>;
const PuzzleIcon = () => <Svg s={21} v={24}><path d="M20.500 11H19V7c0-1.100-.9-2-2-2h-4V3.500a2.500 2.500 0 0 0-5 0V5H4c-1.100 0-2 .9-2 2v3.800h1.500a2.700 2.700 0 0 1 0 5.400H2V20c0 1.100.9 2 2 2h3.800v-1.500a2.700 2.700 0 0 1 5.400 0V22H17c1.100 0 2-.9 2-2v-4h1.500a2.500 2.500 0 0 0 0-5z" fill="#fff" /></Svg>;
const WalletIcon = () => <Svg><rect x="1" y="4.500" width="16.500" height="13.500" rx="2.500" stroke="#fff" strokeWidth="2" /><path d="M1 6V4c0-1.200.8-2 2-2h12c1.200 0 2 1 2 2.500" stroke="#fff" strokeWidth="2" /><rect x="10" y="8.500" width="9" height="5.500" rx="2.500" fill="#000" stroke="#fff" strokeWidth="2" /></Svg>;
const MenuIcon = () => <Svg w={11} h={20} preserveAspectRatio="none"><path d="M0 2.500h20M0 10h20M0 17.500h20" stroke="#fff" strokeWidth="2" /></Svg>;

const Chevrons = () => (
  <svg width="9" height="8" viewBox="0 0 9 8" fill="none"><path d="M.7.500L4 4 .7 7.500M5 .500L8.300 4 5 7.500" stroke="#fff" strokeWidth="1.500" /></svg>
);

const fields = [
  { label: "Email", text: "Email", ls: -0.25, labelLs: -0.25 },
  { label: "Mobile Number", text: "Mobile number", ls: -0.05, labelLs: 0.05 },
  { label: "Date", text: "dd-mm-yyyy", ls: 0.4, labelLs: -0.25, date: true, h: 48 },
  { label: "IP Address", text: "IP Address", ls: -0.05, labelLs: -0.05, h: 48 },
];

export default function App() {
  return (
    <Screen>
      <GlobalStyle />
      <Browser>
        <TabStrip>
          {tabs.map((t, i) => (
            <Tab key={i} $w={t.w} $pad={t.pad} $active={t.active} $sep={t.sep}>
              {t.icon}
              <TabTitle $active={t.active} $fade={t.fade} $ls={t.ls}>{t.title}</TabTitle>
              {t.active && (
                <TabClose>
                  <Svg s={10} v={10}><path d="M.8.800l8.400 8.400M9.200.800L.800 9.200" stroke="#fff" strokeWidth="2" /></Svg>
                </TabClose>
              )}
            </Tab>
          ))}
          <StripControls>
            <Control $w={50}><Svg s={16} v={16}><path d="M8 .500v15M.500 8h15" stroke="#fff" strokeWidth="2.400" /></Svg></Control>
            <Control $w={50} $ml={53}><Svg s={14} v={14}><path d="M.5 4L7 10.500 13.500 4" stroke="#ddd" strokeWidth="1.200" /></Svg></Control>
            <Control $w={64}><Svg s={13} v={13}><path d="M0 6.500h13" stroke="#fff" strokeWidth="1.300" /></Svg></Control>
            <Control $w={52}><Svg s={14} v={14}><path d="M.6 3.500h10v10h-10zM3.500 3.500V.600h10v10h-3" stroke="#fff" strokeWidth="1.200" /></Svg></Control>
            <Control $w={60}><Svg s={13} v={13}><path d="M.5.500l12 12M12.500.500l-12 12" stroke="#fff" strokeWidth="1.200" /></Svg></Control>
          </StripControls>
        </TabStrip>
        <Toolbar>
          <Tool $w={56}><BackIcon /></Tool>
          <Tool $w={24}><ForwardIcon /></Tool>
          <Tool $w={55}><ReloadIcon /></Tool>
          <Tool $w={24}><HomeIcon /></Tool>
          <Tool $w={54} $ml={168}><BookmarkIcon /></Tool>
          <Tool $w={29} $ml={8}><InfoIcon /></Tool>
          <Address>localhost<Port>:5000</Port></Address>
          <ToolDivider />
          <Tool $w={48}><BraveMark w={21} h={22} /></Tool>
          <Tool $w={36}><BatIcon /></Tool>
          <Tool $w={40} $ml={113}><QuestionIcon /></Tool>
          <Tool $w={41}><SearchIcon /></Tool>
          <Tool $w={39}><ShieldWindowIcon /></Tool>
          <Tool $w={41}><AvatarIcon /></Tool>
          <Tool $w={38}><BracesIcon /></Tool>
          <Tool $w={44}><PuzzleIcon /></Tool>
          <Tool $w={40}><WalletIcon /></Tool>
          <Tool $w={44}><MenuIcon /></Tool>
        </Toolbar>
        <Bookmarks>
          {bookmarks.map(([label, w, icon], i) => (
            <Bookmark key={i} $w={w}>
              {icon}
              {label}
            </Bookmark>
          ))}
          <Chevrons />
        </Bookmarks>
      </Browser>
      <PageRow>
        <Viewport>
          <FormPanel>
            <Fields>
              {fields.map((f) => (
                <Field key={f.label}>
                  <FieldLabel $ls={f.labelLs}>{f.label}</FieldLabel>
                  <FieldBox $ls={f.ls} $h={f.h} $filled={f.date}>
                    <FieldText $low={f.h === 48}>{f.text}</FieldText>
                    {f.date && (
                      <Svg><path d="M2.800 4h14.400v14H2.800z" stroke="#000" strokeWidth="1.700" /><path d="M2 3h16v4H2zM5 1h2v3H5zM13 1h2v3h-2z" fill="#000" /></Svg>
                    )}
                  </FieldBox>
                </Field>
              ))}
            </Fields>
            <Button type="button" $w={95} $bg="#dc3545" $fs={19.2} $ls={-0.2} $mr={1}>Submit</Button>
          </FormPanel>
          <Banner><BannerText>Click button to display data ....</BannerText></Banner>
          <LoadRow>
            <Button type="button" $w={135} $h={48} $bg="#0d6efd" $fs={19} $ls={-0.15}>LOAD DATA</Button>
          </LoadRow>
          <Footer>© AlgoMoxMox Task...</Footer>
        </Viewport>
        <Scrollbar>
          <Svg w={9} h={5} v={10} preserveAspectRatio="none"><path d="M0 10L5 0l5 10z" fill="#505050" /></Svg>
          <Thumb />
          <Svg w={9} h={5} v={10} preserveAspectRatio="none"><path d="M0 0h10L5 10z" fill="#a3a3a3" /></Svg>
        </Scrollbar>
      </PageRow>
      <Taskbar>
        <TaskCell $w={60}><Svg><path d="M0 3l8.500-1.200v7.700H0zM9.500 1.600L20 0v9.500H9.500zM0 10.500h8.500v7.700L0 17zM9.500 10.500H20V20L9.500 18.400z" fill="#fff" /></Svg></TaskCell>
        <TaskCell $w={60}><Svg><circle cx="13" cy="7" r="6.500" stroke="#fff" strokeWidth="1.400" /><path d="M8.400 11.600L0 20" stroke="#fff" strokeWidth="1.500" /></Svg></TaskCell>
        <TaskCell $w={60}><Svg><circle cx="10" cy="10" r="8.600" stroke="#fff" strokeWidth="2.600" /></Svg></TaskCell>
        <TaskCell $w={23}><Grip /></TaskCell>
        {taskApps.map((a, i) => (
          <TaskCell key={i} $w={cellWidth(i)} $active={a.active} $open={a.open}>{a.icon}</TaskCell>
        ))}
        <Tray>
          <Grip />
          <TrayText>This PC</TrayText>
          <TrayItem $w={16} $raise={28}><Chevrons /></TrayItem>
          <TrayItem $w={38}><Svg s={16} v={16}><path d="M0 12l8-8 8 8" stroke="#fff" strokeWidth="1.500" /></Svg></TrayItem>
          <TrayItem $w={22}>
            <Svg>
              <path d="M.7 7.500h2.800L8 3v14l-4.500-4.500H.7z" stroke="#fff" strokeWidth="1.300" />
              <path d="M10.500 7.500c1 1.500 1 3.500 0 5M13 5.500c2 3 2 6 0 9" stroke="#fff" strokeWidth="1.200" />
              <path d="M16 2.500c4 5 4 10 0 15" stroke="#7a8087" strokeWidth="1.200" />
            </Svg>
          </TrayItem>
          <TrayItem $w={38}>
            <Svg>
              <path d="M6 5h12v10.500H4V12M18 8h1.400v4.500H18" stroke="#fff" strokeWidth="1.300" />
              <path d="M7 7.500h6V13H7z" fill="#fff" />
              <path d="M1.500 3v2M4.500 3v2M.8 5.500h4.400V8L3 9.500.8 8zM3 9v7" stroke="#fff" strokeWidth="1.200" />
            </Svg>
          </TrayItem>
          <TrayItem $w={24}>
            <Svg s={16} v={16}>
              <path d="M1 16C1 7 7 1.500 15.500 1.500M4.500 16C4.500 9.500 9 5.500 15.500 5.200M8.200 16c0-4.500 3-7 7.300-7" stroke="#c9ccd0" strokeWidth="1.200" />
              <circle cx="14" cy="14.500" r="1.600" fill="#fff" />
            </Svg>
          </TrayItem>
          <Clock>17:53<br />10-05-2022</Clock>
          <TrayItem $w={46}>
            <Svg>
              <path d="M0 0h20v16h-7v4l-5-4H0z" fill="#fff" />
              <path d="M4 4.500h12M4 8h12M4 11.500h8" stroke="#1b232d" strokeWidth="1.300" />
              <circle cx="19.300" cy="19.300" r="9.700" fill="#34383e" stroke="#8b8e92" />
              <Letter x={19.300} y={24.500} size={14.500} fontWeight="600">2</Letter>
            </Svg>
          </TrayItem>
          <ShowDesktop />
        </Tray>
      </Taskbar>
      <Activation>
        <ActivationTitle>Activate Windows</ActivationTitle>
        <ActivationHint>Go to Settings to activate Windows.</ActivationHint>
      </Activation>
    </Screen>
  );
}
